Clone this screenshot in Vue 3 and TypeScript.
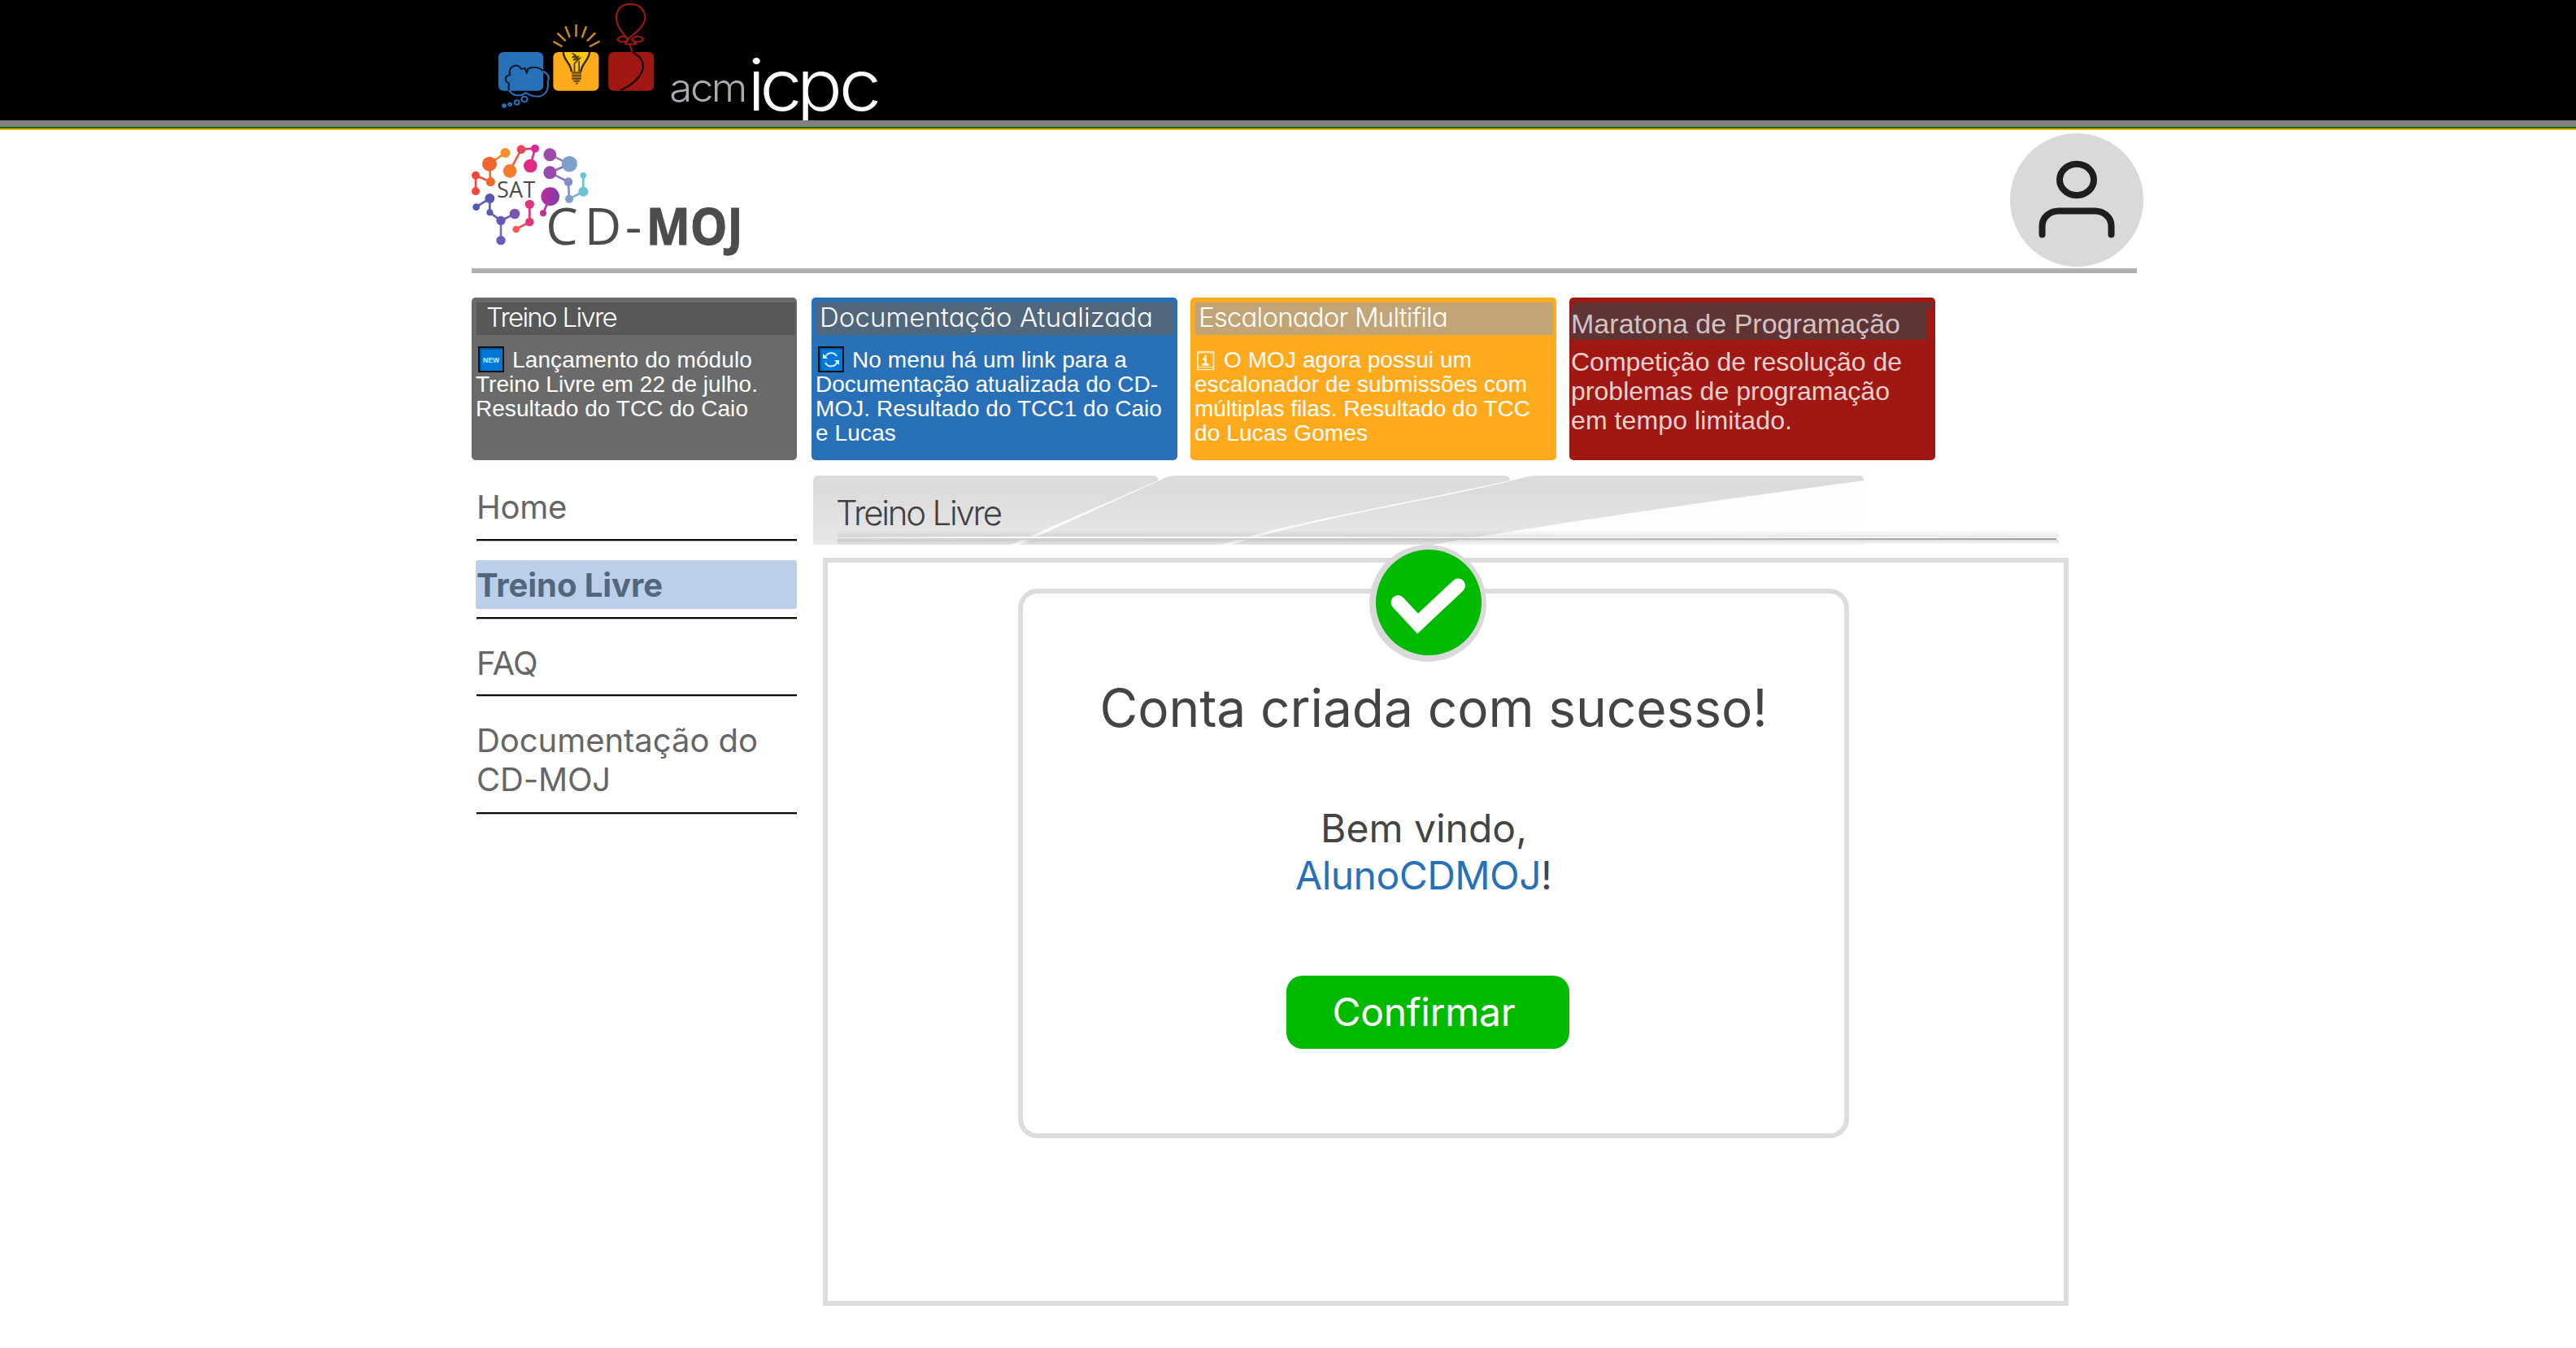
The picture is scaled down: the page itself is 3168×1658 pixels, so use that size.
<script setup lang="ts">
interface Line { text: string; width: number }
interface Card {
  id: string
  title: string
  titleWidth: number
  icon?: 'new' | 'sync' | 'calendar'
  lines: Line[]
}
interface MenuItem { lines: Line[]; active?: boolean }

// Tracks a line of text out (or in) so that it fills the given width.
const vFit = {
  mounted(el: HTMLElement, binding: { value: number }) {
    const natural = el.getBoundingClientRect().width
    const count = (el.textContent ?? '').length
    if (count > 1) el.style.letterSpacing = `${(binding.value - natural) / count}px`
  },
}

const cards: Card[] = [
  {
    id: 'gray', title: 'Treino Livre', titleWidth: 160, icon: 'new',
    lines: [
      { text: 'Lançamento do módulo', width: 295 },
      { text: 'Treino Livre em 22 de julho.', width: 347 },
      { text: 'Resultado do TCC do Caio', width: 335 },
    ],
  },
  {
    id: 'blue', title: 'Documentação Atualizada', titleWidth: 410, icon: 'sync',
    lines: [
      { text: 'No menu há um link para a', width: 338 },
      { text: 'Documentação atualizada do CD-', width: 421 },
      { text: 'MOJ. Resultado do TCC1 do Caio', width: 426 },
      { text: 'e Lucas', width: 99 },
    ],
  },
  {
    id: 'amber', title: 'Escalonador Multifila', titleWidth: 306, icon: 'calendar',
    lines: [
      { text: 'O MOJ agora possui um', width: 305 },
      { text: 'escalonador de submissões com', width: 409 },
      { text: 'múltiplas filas. Resultado do TCC', width: 413 },
      { text: 'do Lucas Gomes', width: 213 },
    ],
  },
  {
    id: 'red', title: 'Maratona de Programação', titleWidth: 405,
    lines: [
      { text: 'Competição de resolução de', width: 407 },
      { text: 'problemas de programação', width: 392 },
      { text: 'em tempo limitado.', width: 272 },
    ],
  },
]

const menu: MenuItem[] = [
  { lines: [{ text: 'Home', width: 111 }] },
  { lines: [{ text: 'Treino Livre', width: 229 }], active: true },
  { lines: [{ text: 'FAQ', width: 75 }] },
  { lines: [{ text: 'Documentação do', width: 346 }, { text: 'CD-MOJ', width: 165 }] },
]

const links: [number, number, number, number, string][] = [
  [75, 167, 130, 191, '#f4503a'], [75, 167, 75, 226, '#f4463c'], [130, 191, 126, 125, '#f26a30'],
  [126, 125, 184, 84, '#f68a28'], [201, 151, 243, 71, '#f0584a'], [243, 71, 294, 68, '#e03a78'],
  [294, 68, 277, 132, '#da2c90'], [349, 91, 421, 125, '#9a78ba'], [421, 125, 349, 157, '#9070b8'],
  [349, 157, 417, 191, '#9070b8'], [417, 191, 420, 254, '#8290c4'], [420, 254, 472, 227, '#78b0cc'],
  [472, 227, 472, 167, '#6cc4d4'], [350, 245, 324, 307, '#b830a0'], [274, 274, 274, 339, '#e0347c'],
  [274, 339, 224, 366, '#f05058'], [77, 284, 127, 252, '#5060b8'], [127, 252, 127, 304, '#5860b8'],
  [127, 304, 168, 334, '#6060b8'], [168, 334, 219, 309, '#7058b8'], [168, 334, 168, 407, '#7868c0'],
]
const nodes: [number, number, number, string][] = [
  [75, 167, 15, '#f4463c'], [75, 226, 15, '#f4463c'], [130, 191, 17, '#f26a30'], [126, 125, 27, '#f26430'],
  [184, 84, 18, '#f78e26'], [201, 151, 25, '#f57a2c'], [243, 71, 16, '#ea4458'], [294, 68, 15, '#d8289a'],
  [277, 132, 25, '#de2c84'], [349, 91, 24, '#9e4cac'], [421, 125, 29, '#80a0cc'], [349, 157, 24, '#9848ac'],
  [417, 191, 16, '#8290c4'], [420, 254, 15, '#80a0cc'], [472, 227, 18, '#66c2d4'], [472, 167, 11, '#66c2d4'],
  [350, 245, 34, 'url(#orb)'], [324, 307, 12, '#c030a0'], [274, 274, 17, '#e0347c'], [274, 339, 16, '#e0347c'],
  [224, 366, 13, '#f2584e'], [77, 284, 13, '#4c5cba'], [127, 252, 18, '#5858b4'], [127, 304, 12, '#5c5cb8'],
  [168, 334, 17, '#6458b4'], [219, 309, 19, '#7a54b0'], [168, 407, 17, '#6c58b8'],
]
</script>

<template>
  <div class="page">
    <header class="topbar">
      <svg class="icpc" viewBox="0 0 1568 444" width="560" height="148" preserveAspectRatio="none">
        <rect x="148" y="192" width="155" height="143" rx="18" fill="#2870b8" />
        <rect x="337" y="192" width="157" height="143" rx="18" fill="#ffab1a" />
        <rect x="527" y="192" width="157" height="143" rx="18" fill="#a01813" />
        <g fill="none" stroke-width="6" stroke-linecap="round" stroke-linejoin="round">
          <path stroke="#101c28" d="M185 335C180 322 188 314 183 306C168 300 170 280 188 276C184 258 190 246 206 242C216 240 222 246 226 254L240 252L246 270L250 254C268 244 292 248 303 264" />
          <path stroke="#2870b8" d="M303 264C318 270 326 286 318 300C322 330 312 350 288 356C268 356 252 350 242 342C232 354 206 356 192 342L186 335" />
          <circle cx="238" cy="366" r="10" stroke="#2870b8" />
          <circle cx="212" cy="378" r="8" stroke="#2870b8" />
          <circle cx="188" cy="385" r="5" stroke="#2870b8" />
          <circle cx="168" cy="390" r="5" stroke="#2870b8" fill="#2870b8" />
        </g>
        <g stroke="#d08a18" stroke-width="7">
          <path d="M337 153L368 172M351 122L380 151M379 97L394 138M416 90V136M451 97L436 139M482 121L454 151M497 152L462 172" />
        </g>
        <path d="M371 192H463C462 222 436 232 434 262H400C398 232 372 222 371 192Z" fill="#ffc60e" />
        <path d="M372 192C372 224 398 230 400 265M462 192C460 224 436 230 432 265" fill="none" stroke="#2c2818" stroke-width="7" />
        <path d="M402 196L414 204L402 212L426 208L406 222L428 216L412 232M410 232V264M426 226V264" fill="none" stroke="#4c3c10" stroke-width="5" />
        <path d="M401 265H434V290L426 302H409L401 290Z" fill="#b87c20" />
        <path d="M401 268H434M401 279H434M401 290H434M408 300H428M414 308H422" stroke="#5c4218" stroke-width="5" />
        <g fill="none" stroke="#a01813" stroke-width="6">
          <path d="M602 15C570 15 554 38 554 68C556 100 578 122 594 146C608 130 652 100 654 66C652 36 634 15 602 15Z" />
          <path d="M594 146C584 128 566 132 558 146C568 160 586 156 594 146ZM608 146C618 130 634 132 646 142C644 158 622 158 608 146ZM594 146L586 163H622L610 146M600 164L610 192" />
        </g>
        <path d="M610 192C640 210 652 232 644 260C634 292 600 320 568 333" fill="none" stroke="#1c0806" stroke-width="7" />
        <text class="acm" x="737 809 881" y="375">acm</text>
        <text class="big" x="1006 1048 1175 1321" y="407">icpc</text>
      </svg>
    </header>
    <div class="stripe"></div>

    <div class="content">
      <div class="brand">
        <svg viewBox="60 0 1140 510" width="380" height="170">
          <defs>
            <linearGradient id="orb"><stop offset="0" stop-color="#c02c9c" /><stop offset="1" stop-color="#7c3ca8" /></linearGradient>
          </defs>
          <line v-for="(l, i) in links" :key="'l' + i" :x1="l[0]" :y1="l[1]" :x2="l[2]" :y2="l[3]" :stroke="l[4]" stroke-width="8" />
          <circle v-for="(n, i) in nodes" :key="'n' + i" :cx="n[0]" :cy="n[1]" :r="n[2]" :fill="n[3]" />
          <g fill="#4d4b4c" font-family="'Open Sans', sans-serif">
            <text x="153" y="250" font-size="81" textLength="142">SAT</text>
            <text x="334 476" y="422" font-size="188">CD</text>
            <text x="626" y="422" font-size="188" textLength="62" lengthAdjust="spacingAndGlyphs">-</text>
            <text x="704" y="422" font-size="188" font-weight="700" textLength="357" lengthAdjust="spacingAndGlyphs" stroke="#4d4b4c" stroke-width="3">MOJ</text>
          </g>
        </svg>
        <div class="avatar">
          <svg viewBox="0 0 164 164" width="164" height="164" fill="none" stroke="#1e1e1e" stroke-width="8" stroke-linecap="round">
            <ellipse cx="82" cy="57" rx="21" ry="19.2" />
            <path d="M39.5 124.500V114C39.5 103 49 95.500 60 95.500H104C115 95.500 124.500 103 124.500 114V124.500" />
          </svg>
        </div>
      </div>
      <div class="rule"></div>

      <section class="cards">
        <article v-for="card in cards" :key="card.id" :class="['card', card.id]">
          <h2><span v-fit="card.titleWidth">{{ card.title }}</span></h2>
          <div class="body">
            <div v-for="(line, i) in card.lines" :key="i" class="line">
              <svg v-if="i === 0 && card.icon === 'new'" class="ico" viewBox="0 0 32 32">
                <rect width="32" height="32" fill="#101010" />
                <rect x="2" y="2" width="28" height="28" fill="#005a9e" />
                <rect x="4" y="4" width="26" height="26" fill="#0078d7" />
                <text x="6" y="20" font-size="9" font-weight="700" fill="#d4e8f8" textLength="20" lengthAdjust="spacingAndGlyphs">NEW</text>
              </svg>
              <svg v-else-if="i === 0 && card.icon === 'sync'" class="ico" viewBox="0 0 32 32">
                <rect width="32" height="32" fill="#101010" />
                <rect x="2" y="2" width="28" height="28" fill="#005a9e" />
                <rect x="4" y="4" width="26" height="26" fill="#0078d7" />
                <path d="M8.500 14A8 8 0 0 1 23 12M24 18A8 8 0 0 1 9 20" fill="none" stroke="#d8ecfa" stroke-width="2" />
                <path d="M6 9V15H12ZM26 23V17H20Z" fill="#e6f3fc" />
              </svg>
              <svg v-else-if="i === 0 && card.icon === 'calendar'" class="ico cal" viewBox="0 0 22 32" fill="none" stroke="#fff0d2">
                <path d="M1 7H20.500V28.500H1Z" stroke-width="1.600" />
                <path d="M2 25.500H20" stroke-width="1" />
                <path d="M3 5.500V9M6.500 5.500V9M10 5.500V9M13.500 5.500V9M17 5.500V9" stroke-width="1.400" />
                <path d="M7 15.500H10.500V22.500M6.500 22.500H14.500M10.500 11V13.500" stroke="#fff" stroke-width="2.400" />
              </svg>
              <span v-fit="line.width">{{ line.text }}</span>
            </div>
          </div>
        </article>
      </section>

      <div class="columns">
        <nav class="sidebar">
          <div v-for="(item, i) in menu" :key="i" :class="['item', { active: item.active }]">
            <div class="label">
              <div v-for="line in item.lines" :key="line.text"><span v-fit="line.width">{{ line.text }}</span></div>
            </div>
          </div>
        </nav>

        <main class="main">
          <svg class="banner" viewBox="992 566 1552 104" width="1552" height="104">
            <defs>
              <linearGradient id="tab" x1="0" y1="585" x2="0" y2="670" gradientUnits="userSpaceOnUse">
                <stop offset="0" stop-color="#dcdadb" /><stop offset=".25" stop-color="#dddbdc" /><stop offset="1" stop-color="#e9e7e8" />
              </linearGradient>
              <linearGradient id="shadeTop" x1="0" y1="0" x2="0" y2="1">
                <stop offset="0" stop-color="#000" stop-opacity=".01" /><stop offset="1" stop-color="#000" stop-opacity=".09" />
              </linearGradient>
              <linearGradient id="shadeBottom" x1="0" y1="0" x2="0" y2="1">
                <stop offset="0" stop-color="#000" stop-opacity=".12" /><stop offset="1" stop-color="#000" stop-opacity=".02" />
              </linearGradient>
              <linearGradient id="hair" x1="1030" y1="0" x2="2532" y2="0" gradientUnits="userSpaceOnUse">
                <stop offset="0" stop-color="#d6d5d5" /><stop offset=".5" stop-color="#c4c4c4" /><stop offset="1" stop-color="#9c9c9c" />
              </linearGradient>
              <linearGradient id="glint" x1="1030" y1="0" x2="2532" y2="0" gradientUnits="userSpaceOnUse">
                <stop offset="0" stop-color="#fff" stop-opacity=".2" /><stop offset=".15" stop-color="#fff" /><stop offset=".35" stop-color="#fff" stop-opacity=".9" /><stop offset=".7" stop-color="#fff" stop-opacity="0" />
              </linearGradient>
            </defs>
            <rect x="992" y="566" width="1300" height="104" fill="#fffcfd" />
            <rect x="2292" y="566" width="80" height="9" fill="#fffcfd" />
            <g fill="url(#tab)">
              <path d="M1000 670V592Q1000 585 1007 585H1418Q1424 585 1424 591C1360 619 1300 645 1243 670Z" />
              <path d="M1254 670C1318 640 1380 612 1430 589Q1438 585 1447 585H1850Q1857 585 1857 591C1720 621 1590 642 1500 670Z" />
              <path d="M1515 670C1610 638 1760 616 1868 589Q1880 585 1894 585H2286Q2292 585 2292 591C2130 613 1900 645 1762 670Z" />
            </g>
            <rect x="1030" y="653" width="1502" height="8" fill="url(#shadeTop)" />
            <rect x="1030" y="664" width="1502" height="6" fill="url(#shadeBottom)" />
            <rect x="1030" y="662" width="1499" height="2" fill="url(#hair)" />
            <rect x="1030" y="660" width="1502" height="2" fill="url(#glint)" />
            <text class="geo" x="1028" y="646" font-size="42" fill="#424242" textLength="205">Treino Livre</text>
          </svg>

          <div class="panel">
            <div class="dialog">
              <svg class="badge" viewBox="0 0 144 144" width="144" height="144">
                <circle cx="72" cy="72" r="72" fill="#d9d9d9" />
                <circle cx="73" cy="71" r="65" fill="#00ba00" />
                <path d="M35.300 71L59.600 97L109.300 50.300" fill="none" stroke="#fff" stroke-width="17.500" stroke-linecap="round" />
              </svg>
              <h1><span v-fit="821">Conta criada com sucesso!</span></h1>
              <div class="welcome">
                <div><span v-fit="254">Bem vindo,</span></div>
                <div><span v-fit="302" class="user">AlunoCDMOJ</span>!</div>
              </div>
              <button type="button"><span v-fit="225">Confirmar</span></button>
            </div>
          </div>
        </main>
      </div>
    </div>
  </div>
</template>

<style>
body {
  margin: 0;
  background: #fff;
  overflow: hidden;
}
</style>

<style scoped>
.page {
  width: 3168px;
  height: 1658px;
  overflow: hidden;
  background: #fff;
  font-family: Inter, sans-serif;
}
.page * { box-sizing: border-box; }
span { white-space: nowrap; display: inline-block; }
svg { display: block; flex: none; }
.topbar {
  height: 148px;
  padding-left: 560px;
  background: #000;
}
.acm { font: 300 143px Inter, sans-serif; fill: #a8acb0; }
.big { font: 300 262px Inter, sans-serif; fill: #fff; }
.stripe {
  height: 12px;
  border-top: 8px solid #808080;
  border-bottom: 2px solid #ffb400;
  background: #006a10;
}
.content { margin-left: 580px; }
.brand {
  display: flex;
  justify-content: space-between;
  width: 2056px;
  height: 170px;
}
.avatar {
  width: 164px;
  height: 164px;
  margin-top: 4px;
  border-radius: 50%;
  background: #d9d9d9;
}
.rule {
  width: 2048px;
  height: 6px;
  background: #b0b0b0;
}
.cards {
  display: flex;
  gap: 16px;
  margin-top: 30px;
}
.card {
  width: 450px;
  height: 200px;
  padding: 6px 4px 0 6px;
  border-radius: 5px;
  color: #fff;
}
.card h2 {
  height: 40px;
  margin: 0;
  padding-left: 4px;
  font: 300 33px/37px Inter, sans-serif;
  font-feature-settings: "cv11";
}
.geo {
  font-family: Inter, sans-serif;
  font-weight: 300;
}
.body {
  padding-top: 16px;
  font: 28px/30px "Liberation Sans", Arial, sans-serif;
}
.line { display: flex; height: 30px; margin-left: -1px; }
.ico { width: 32px; height: 32px; margin: -2px 10px 0 3px; }
.ico.cal { width: 22px; margin: -2px 11px 0 3px; }
.gray { width: 400px; margin-right: 2px; padding-right: 2px; background: #6a6a6a; }
.gray h2 { padding-left: 12px; background: #585858; }
.blue { background: #2870b8; }
.blue h2 { background: #50677d; }
.amber { background: #ffaa1c; }
.amber h2 { background: #c2a576; }
.red {
  padding: 12px 10px 0 2px;
  background: linear-gradient(#603434, #603434) 6px 6px / 440px 8px no-repeat #a01813;
}
.red h2 {
  padding-left: 0;
  background: #603434;
  color: #d1c3c3;
  font: 34px/40px "Liberation Sans", Arial, sans-serif;
}
.red .body {
  padding-top: 9px;
  color: #ecd0cf;
  font-size: 32px;
  line-height: 36px;
}
.red .line { height: 36px; margin-left: 0; }
.columns { display: flex; }
.sidebar {
  width: 412px;
  padding: 3.500px 12px 0 4px;
  border-top: 8px solid #fffcfd;
  height: 500px;
  font-size: 40px;
  line-height: 48px;
  color: #666;
}
.item {
  margin-left: 2px;
  padding: 24px 0 9.500px;
  border-bottom: 2px solid #080808;
  box-shadow: 0 1px #b8b8b8;
}
.item:first-child { padding-top: 15.500px; padding-bottom: 10px; }
.item:last-child { padding-bottom: 11px; }
.label {
  margin-left: -1px;
  padding: 7px 0 5px 1px;
  border-radius: 3px;
}
.active .label {
  background: #bbd0e8;
  color: #50677d;
  font-weight: 700;
}
.main { width: 1552px; }
.panel {
  width: 1532px;
  height: 920px;
  margin: 16px 0 0 20px;
  padding: 32px 0 0 234px;
  border: 6px solid #dddbdb;
}
.dialog {
  position: relative;
  display: flex;
  flex-direction: column;
  align-items: center;
  width: 1022px;
  height: 676px;
  padding-top: 102px;
  border: 6px solid #dcdddb;
  border-radius: 24px;
  color: #444;
}
.badge {
  position: absolute;
  top: -60px;
  left: 426px;
}
h1 {
  margin: 0;
  font-size: 64px;
  font-weight: 400;
  line-height: 78px;
}
.welcome {
  margin: 80px 24px 0 0;
  font-size: 48px;
  line-height: 58px;
  text-align: center;
}
.user { color: #2870b8; }
button {
  width: 348px;
  height: 90px;
  margin: 94px 14px 0 0;
  padding: 0 10px 0 0;
  border: 0;
  border-radius: 20px;
  background: #00ba00;
  color: #fff;
  font: 400 48px/88px Inter, sans-serif;
}
</style>
